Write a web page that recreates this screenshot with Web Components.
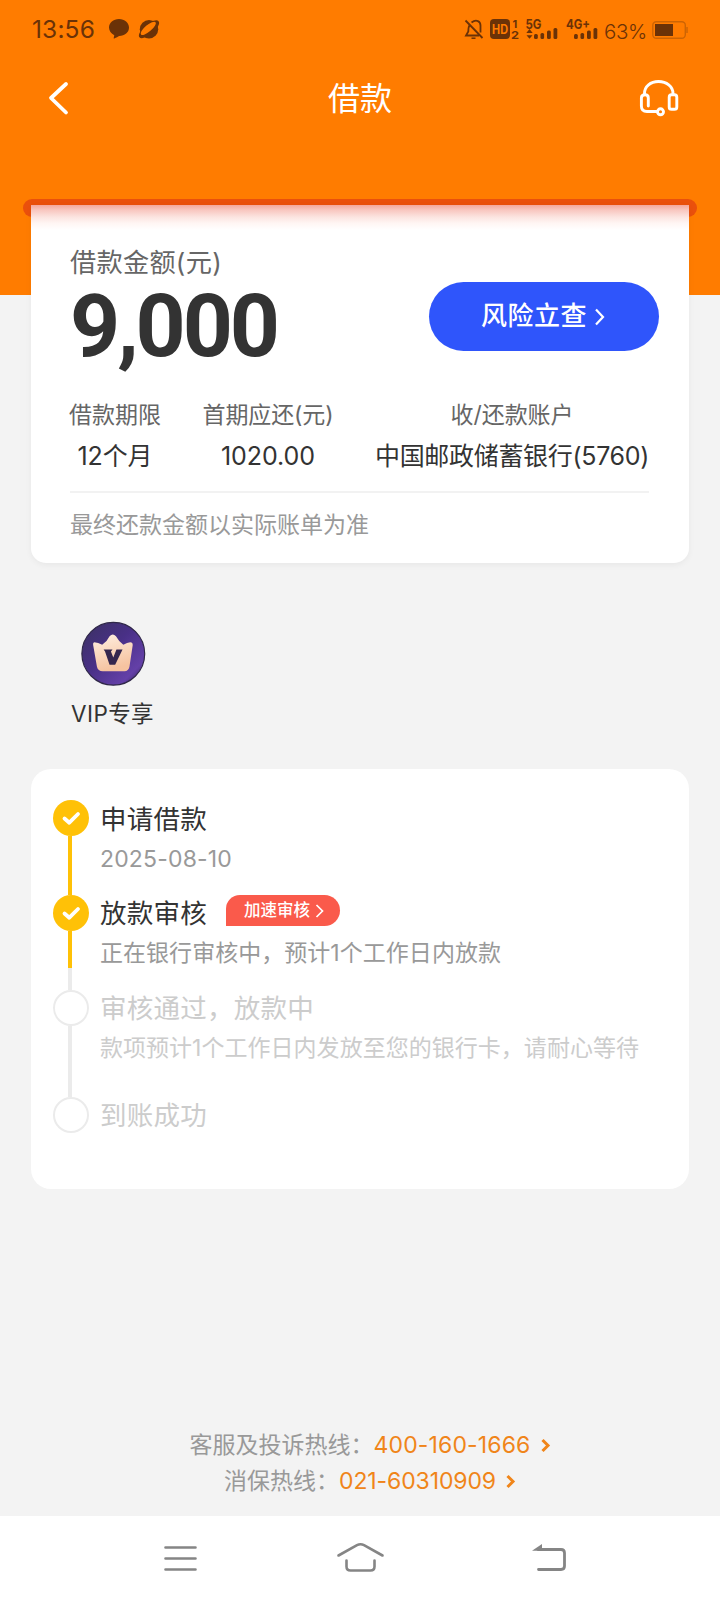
<!DOCTYPE html>
<html lang="zh-CN">
<head>
<meta charset="utf-8">
<title>借款</title>
<style>
html,body{margin:0;padding:0}
body{width:720px;height:1600px;overflow:hidden;background:#f3f3f3;font-family:Inter,"Noto Sans CJK SC",sans-serif}
</style>
</head>
<body>
<loan-page></loan-page>
<script>
const define = (name, html, setup) => {
  const t = document.createElement('template');
  t.innerHTML = html;
  customElements.define(name, class extends HTMLElement {
    constructor() {
      super();
      this.attachShadow({mode: 'open'}).appendChild(t.content.cloneNode(true));
    }
    connectedCallback() { if (setup) setup(this, this.shadowRoot); }
  });
};

/* One line of text; "size" is the font size, "fit" the advance width it is tracked to. */
define('ui-text', `<style>
:host{display:block;white-space:nowrap;flex:none}
span{display:inline-block}
</style><span><slot></slot></span>`, (el, root) => {
  const s = el.getAttribute('size');
  if (s) el.style.fontSize = s + 'px';
  const fit = parseFloat(el.getAttribute('fit'));
  if (fit) {
    const span = root.querySelector('span');
    const w = span.getBoundingClientRect().width;
    span.style.letterSpacing = ((fit - w) / [...el.textContent].length) + 'px';
    el.style.width = fit + 'px';
  }
});

define('status-bar', `<style>
:host{display:flex;height:58px;box-sizing:border-box;padding:0 32px 0 32px;justify-content:space-between;color:#6b3207}
div{display:flex}
ui-text{line-height:59px}
svg{display:block;flex:none}
</style>
<div><ui-text size="24.500" fit="63">13:56</ui-text>
<svg width="70" height="58" viewBox="95 0 70 58" fill="#6b3207">
<path d="M119 19c5.700 0 10 3.700 10 8.600 0 4.900-4.300 8.400-9.800 8.500-1.300.7-2.800 1.700-4.900 2.400-.4.100-.8-.200-.6-.6l.6-2.700c-3.200-1.600-5.300-4.300-5.300-7.600 0-4.900 4.300-8.600 10-8.600z"/>
<circle cx="149" cy="29.200" r="9.200"/>
<ellipse cx="149" cy="29.200" rx="12.500" ry="5" transform="rotate(-40 149 29.200)"/>
<ellipse cx="148.300" cy="28.300" rx="9.500" ry="3.300" transform="rotate(-40 148.300 28.300)" fill="#ff7c00"/></svg></div>
<div><svg width="143" height="58" viewBox="461 0 143 58" fill="none" stroke="#6b3207">
<g stroke-width="1.800"><path d="M465.500 20.500l17 17.500M470 24.500c-1.600 2-1.700 4-1.700 7l-2.300 4h13M471.500 22.500c5-3.700 9-1 9 3v7"/><path d="M471.500 38.200h4" stroke-width="1.500"/></g>
<rect x="490" y="19" width="20" height="20" rx="4" fill="#6b3207" stroke="none"/>
<text x="500" y="33.500" text-anchor="middle" font-size="12.500" font-weight="700" fill="#ff7c00" stroke="none" textLength="16" lengthAdjust="spacingAndGlyphs">HD</text>
<g fill="#6b3207" stroke="none" font-weight="700">
<text x="512.500" y="27.500" font-size="11">1</text><text x="511" y="38.500" font-size="11" textLength="8" lengthAdjust="spacingAndGlyphs">2</text>
<text x="525.500" y="28.500" font-size="13" textLength="16" lengthAdjust="spacingAndGlyphs">5G</text>
<path d="M529.500 29l3.200 4h-6.400zM529.500 38.700l3-3.500h-6z"/>
<rect x="534" y="34" width="3.800" height="5" rx="1.500"/><rect x="540.500" y="33" width="3.600" height="6" rx="1.500"/><rect x="547" y="30.500" width="3.800" height="8.500" rx="1.500"/><rect x="553.500" y="28" width="3.800" height="11" rx="1.500"/>
<text x="566" y="28.500" font-size="13" textLength="24" lengthAdjust="spacingAndGlyphs">4G+</text>
<rect x="574" y="34" width="3.800" height="5" rx="1.500"/><rect x="580.500" y="33" width="3.600" height="6" rx="1.500"/><rect x="587" y="30.500" width="3.800" height="8.500" rx="1.500"/><rect x="593.500" y="28" width="3.800" height="11" rx="1.500"/>
</g></svg>
<ui-text size="20.500" fit="43" style="line-height:63px;font-weight:300">63%</ui-text>
<svg width="41" height="58" viewBox="647 0 41 58"><rect x="652.800" y="21.800" width="32.500" height="16.500" rx="3.500" fill="none" stroke="#cc6404" stroke-width="1.400"/><rect x="655" y="24" width="18" height="12" fill="#6b3207"/><path d="M687 27v6" stroke="#cc6404" stroke-width="1.400"/></svg></div>`);

define('nav-header', `<style>
:host{display:grid;grid-template-columns:160px 1fr 160px;height:80px;align-items:center;color:#fff}
ui-text{justify-self:center;line-height:82px;height:80px}
svg{display:block}
.r{justify-self:end}
</style>
<svg width="100" height="80" viewBox="0 58 100 80"><path d="M66 84L51 98l15 14.500" fill="none" stroke="#fff" stroke-width="3.800" stroke-linecap="round" stroke-linejoin="round"/></svg>
<ui-text size="32" fit="64">借款</ui-text>
<svg class="r" width="100" height="80" viewBox="620 58 100 80" fill="none" stroke="#fff" stroke-width="2.900"><path d="M644.500 94.500v-1c0-7 6-12 14-12s14.500 5 14.500 12v1"/><path d="M648.300 106v-8c0-2.300-1-3.200-3.200-3.200s-3.700 1-3.700 3.200v8c0 3.700 2 5.500 5.500 5.500h10.600" stroke-linecap="round"/><rect x="669.200" y="94.800" width="7.600" height="14.500" rx="2.400"/><circle cx="660.500" cy="111.800" r="3"/></svg>`);

define('info-col', `<style>
:host{display:flex;flex-direction:column;align-items:center;flex:none}
.l{color:#666;line-height:40px;font-size:23px}.v{color:#333;line-height:42px;font-size:25px}
</style><div class="l"><slot name="label"></slot></div><div class="v"><slot></slot></div>`);

define('amount-card', `<style>
:host{display:block;margin:-90px 31px 0;height:358px;box-sizing:border-box;border-radius:0 0 15px 15px;padding:38px 40px 0 39px;background:linear-gradient(#f4a79c 0,#f8c6bf 5px,#fce4e0 12px,#fff5f3 18px,#fff 25px);box-shadow:0 2px 6px rgba(0,0,0,.05)}
.top{display:flex;justify-content:space-between;height:126px}
.lbl{color:#666;line-height:40px}
.num{font-family:Roboto,sans-serif;font-weight:700;color:#333;line-height:86px}
.btn{margin:39px -10px 0 0;width:230px;height:69px;border-radius:35px;background:#2f55fb;color:#fff;display:flex;align-items:center;box-sizing:border-box;padding-left:52px;font-weight:500}
.btn ui-text{line-height:38px;height:40px}
.cols{display:flex;justify-content:space-between;height:96px;margin:26px 0 0 -1px}
.note{border-top:2px solid #f2f2f2;color:#999;line-height:64px}
</style>
<div class="top"><div><ui-text class="lbl" size="26.200" fit="152">借款金额(元)</ui-text><ui-text class="num" size="87.500" fit="207">9,000</ui-text></div>
<div class="btn"><ui-text size="26" fit="106">风险立查</ui-text><svg width="20" height="24" viewBox="0 0 20 24"><path d="M9 4.500l7 7.500-7 7.500" fill="none" stroke="#fff" stroke-width="2.200"/></svg></div></div>
<div class="cols">
<info-col><ui-text slot="label" fit="92">借款期限</ui-text><ui-text fit="75">12个月</ui-text></info-col>
<info-col><ui-text slot="label" fit="131">首期应还(元)</ui-text><ui-text fit="94">1020.00</ui-text></info-col>
<info-col><ui-text slot="label" fit="123">收/还款账户</ui-text><ui-text fit="274">中国邮政储蓄银行(5760)</ui-text></info-col>
</div>
<ui-text class="note" size="23">最终还款金额以实际账单为准</ui-text>`);

define('vip-entry', `<style>
:host{display:flex;flex-direction:column;align-items:center;width:84px;height:120px;margin:58px 0 0 70.500px;color:#333}
svg{display:block}ui-text{line-height:55px}
</style>
<svg width="66" height="66" viewBox="0 0 66 66"><defs><linearGradient id="a" x1="0" y1="0" x2="1" y2="1"><stop offset="0" stop-color="#3b3161"/><stop offset=".45" stop-color="#493087"/><stop offset=".8" stop-color="#6440a8"/><stop offset="1" stop-color="#2b1c4c"/></linearGradient><linearGradient id="b" x1="0" y1="0" x2=".3" y2="1"><stop offset="0" stop-color="#fff0e2"/><stop offset="1" stop-color="#f6c3a0"/></linearGradient></defs>
<circle cx="33.300" cy="33.300" r="31.900" fill="url(#a)" stroke="#2f2748" stroke-width="1.200"/>
<path d="M14 21.500q4 .5 8 2.500 5-3 7.500-8.500 3.300-3.500 6.500 0 3 5.500 7.500 8.500 4-2 7-2.500 2.700 0 2.500 3l-3.300 22q-1 4.500-5 4.500H22.500q-4.800 0-5.800-4.500L12.800 24q-.3-2 1.200-2.500z" fill="url(#b)"/>
<path d="M23.500 29h9l-1.600 2 2.400 6 3.200-8h6.200l-7.500 15.500h-5.700l-4.600-13.500z" fill="#35264e"/></svg>
<ui-text size="22.500" fit="83">VIP专享</ui-text>`);

define('step-item', `<style>
:host{display:flex;height:var(--h)}
.rail{width:36px;display:flex;flex-direction:column;align-items:center;flex:none}
.dot{width:36px;height:36px;border-radius:50%;box-sizing:border-box;border:2px solid #ebebeb;background:#fff;flex:none}
.bar{width:4px;flex:1;margin-left:-2px;background:var(--bar,#ebebeb)}
:host([done]) .dot{background:#ffc107;border:0}
svg{display:none}:host([done]) .dot svg{display:block}
.body{padding-left:11px;color:#ccc;margin-top:var(--up,0)}
.t{display:flex;height:38px;line-height:38px;font-size:26.500px}
.s{line-height:42px;font-size:23px}
:host([done]) .t{color:#333}:host([done]) .s{color:#999}
</style><div class="rail"><div class="dot"><svg width="36" height="36" viewBox="0 0 36 36"><path d="M11.500 18.500l4.800 4.200 8.700-8.700" fill="none" stroke="#fff" stroke-width="3.800" stroke-linecap="round" stroke-linejoin="round"/></svg></div><div class="bar"></div></div>
<div class="body"><div class="t"><slot name="title"></slot></div><div class="s"><slot></slot></div></div>`);

define('speed-badge', `<style>
:host{display:flex;width:114px;height:31px;box-sizing:border-box;border-radius:14px 15.500px 15.500px 0;background:#fa5a4b;color:#fff;padding-left:18px;margin:1px 0 0 19px;align-items:center;font-weight:500}
</style><ui-text size="16.500" fit="66" style="line-height:31px"><slot></slot></ui-text><svg width="16" height="18" viewBox="0 0 16 18"><path d="M6.500 3L12.500 9l-6 6" fill="none" stroke="#fff" stroke-width="1.700"/></svg>`);

define('step-card', `<style>
:host{display:block;margin:28px 31px 0;height:420px;box-sizing:border-box;border-radius:20px;background:#fff;padding:31px 22px 0}
</style>
<step-item done style="--h:95px;--bar:#ffc107"><ui-text slot="title" fit="107">申请借款</ui-text><ui-text fit="132">2025-08-10</ui-text></step-item>
<step-item done style="--h:95px;--up:-1px;--bar:linear-gradient(#ffc107 37px,#ebebeb 37px)"><ui-text slot="title" fit="107">放款审核</ui-text><speed-badge slot="title">加速审核</speed-badge><ui-text fit="401">正在银行审核中，预计1个工作日内放款</ui-text></step-item>
<step-item style="--h:107px;--up:-1px"><ui-text slot="title" fit="214">审核通过，放款中</ui-text><ui-text fit="539">款项预计1个工作日内发放至您的银行卡，请耐心等待</ui-text></step-item>
<step-item style="--h:36px;--up:-1px"><ui-text slot="title" fit="107">到账成功</ui-text></step-item>`);

define('hot-line', `<style>
:host{display:flex;justify-content:center;align-items:center;height:36px;line-height:36px;color:#999;font-size:23px}
b{font-weight:400;color:#f08519}
</style><slot name="label"></slot><b><slot></slot></b><svg width="22" height="20" viewBox="0 0 22 20"><path d="M11.500 5l5.500 5.500-5.500 5.500" fill="none" stroke="#f08519" stroke-width="3"/></svg>`);

define('system-nav', `<style>
:host{display:flex;justify-content:space-between;height:84px;background:#fff;padding:0 146px}
svg{display:block}
</style>
<svg width="70" height="84" viewBox="146 1516 70 84"><path d="M165.500 1547.500h30M165.500 1558.500h30M165.500 1569.500h30" stroke="#858585" stroke-width="2.600" stroke-linecap="round"/></svg>
<svg width="70" height="84" viewBox="325 1516 70 84"><path d="M338.500 1555.500l18.500-10.300q3.500-1.800 7 0l18.500 10.300M346.500 1560.500v6q0 4 4 4h20q4 0 4-4v-6" fill="none" stroke="#858585" stroke-width="2.600" stroke-linecap="round"/></svg>
<svg width="70" height="84" viewBox="504 1516 70 84"><path d="M538 1549.500h23q3.500 0 3.500 3.500v13q0 3.500-3.500 3.500h-22.500" fill="none" stroke="#858585" stroke-width="2.800" stroke-linecap="round"/><path d="M532 1550.800l10-6.800v6.800z" fill="#858585"/></svg>`);

define('loan-page', `<style>
:host{display:flex;flex-direction:column;height:1600px;width:720px}
.head{height:295px;background:#ff7c00;flex:none}
.slot{height:18px;margin:0 23px;border-radius:9px;background:#ea500c}
nav-header{margin-bottom:61px}
.gap{flex:1}
hot-line{flex:none}
</style>
<div class="head"><status-bar></status-bar><nav-header></nav-header><div class="slot"></div></div>
<amount-card></amount-card><vip-entry></vip-entry><step-card></step-card>
<div class="gap"></div>
<hot-line style="padding-left:22px"><ui-text slot="label" fit="184">客服及投诉热线：</ui-text><ui-text fit="157">400-160-1666</ui-text></hot-line>
<hot-line style="padding-left:22px;margin-bottom:17px"><ui-text slot="label" fit="115">消保热线：</ui-text><ui-text fit="157">021-60310909</ui-text></hot-line>
<system-nav></system-nav>`);
</script>
</body>
</html>
